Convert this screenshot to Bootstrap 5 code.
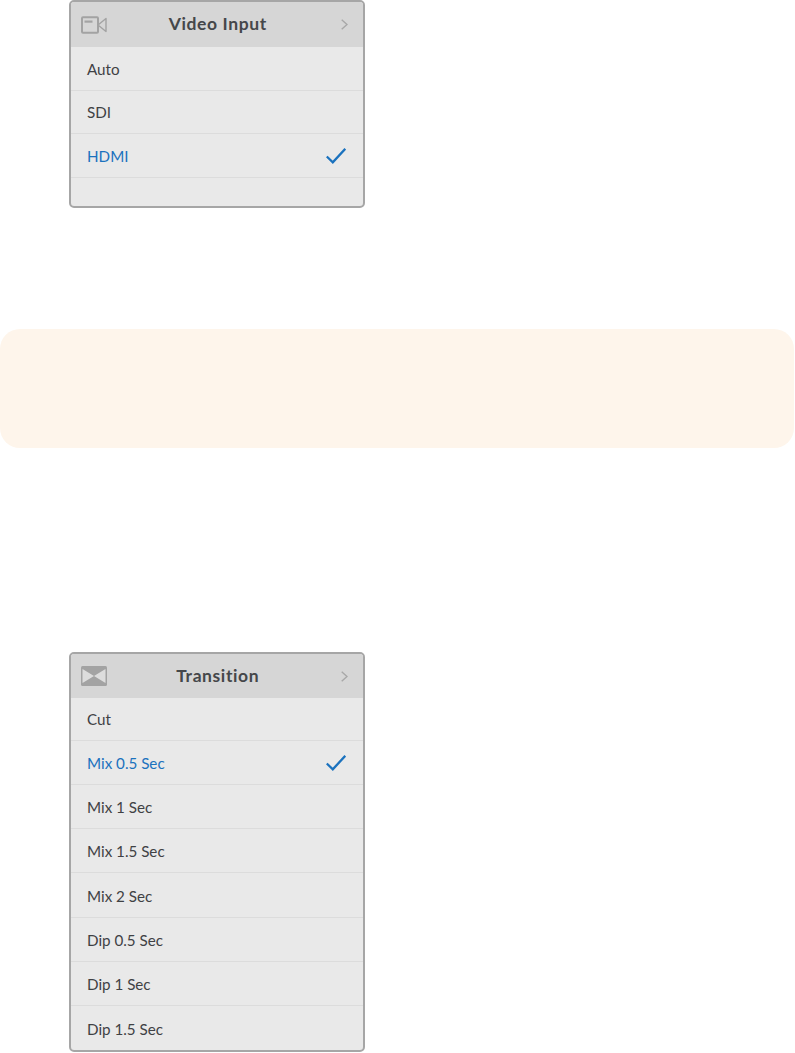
<!DOCTYPE html>
<html lang="en">

<head>
    <meta charset="UTF-8">
    <meta name="viewport" content="width=device-width, initial-scale=1.0">
    <title>Video Input and Transition Menus</title>
    <link href="https://cdn.jsdelivr.net/npm/bootstrap@5.3.0/dist/css/bootstrap.min.css" rel="stylesheet">
    <style>
        body {
            background-color: #FFFFFF;
            font-family: "Lato", "Liberation Sans", sans-serif;
            overflow: hidden;
        }

        .menu-panel {
            width: 296px;
            margin-left: 69px;
            background-color: #E9E9E9;
            border: 2px solid #A6A6A6;
            border-radius: 5px;
            overflow: hidden;
        }

        .menu-head {
            height: 45px;
            background-color: #D6D6D6;
            padding: 0 15px 0 9.5px;
            color: #45474A;
            font-size: 17.5px;
            font-weight: 700;
            letter-spacing: 0.6px;
        }

        .menu-tall .menu-head {
            height: 44px;
        }

        .menu-title {
            flex: 1;
            text-align: center;
            margin-right: 12px;
        }

        .menu-row {
            height: 43.5px;
            padding: 2px 17px 0 16px;
            background-color: transparent;
            border: 0;
            border-bottom: 1px solid #DCDCDC;
            border-radius: 0;
            color: #3F4144;
            font-size: 15.2px;
        }

        .menu-tall .menu-row {
            height: 44.3px;
        }

        .menu-tall .menu-row:first-child {
            height: 42.6px;
        }

        .menu-tall .menu-row:last-child {
            height: 43.8px;
            border-bottom: 0;
        }

        .menu-row.is-picked {
            color: #1B72BE;
        }

        .menu-row.is-blank {
            height: 28.5px;
            border-bottom: 0;
        }

        .notice-band {
            height: 119px;
            margin-top: 121px;
            margin-bottom: 204px;
            margin-right: 1px;
            background-color: #FEF5EB;
            border-radius: 20px;
        }
    </style>
</head>

<body>
    <div class="menu-panel">
        <div class="menu-head d-flex align-items-center">
            <svg width="26" height="18" viewBox="0 0 26 18" fill="none">
                <rect x="1" y="1.2" width="16" height="15.6" rx="1" stroke="#A3A3A3" stroke-width="2"/>
                <rect x="3.5" y="4.5" width="8" height="2.2" fill="#A3A3A3"/>
                <path d="M17 9L25 2.5V15.5Z" stroke="#A3A3A3" stroke-width="1.4" stroke-linejoin="round"/>
            </svg>
            <div class="menu-title">Video Input</div>
            <svg width="7" height="11" viewBox="0 0 7 11" fill="none">
                <path d="M0.7 0.7L6 5.5L0.7 10.3" stroke="#A8A8A8" stroke-width="1.4"/>
            </svg>
        </div>
        <ul class="list-group list-group-flush">
            <li class="list-group-item menu-row d-flex align-items-center">Auto</li>
            <li class="list-group-item menu-row d-flex align-items-center">SDI</li>
            <li class="list-group-item menu-row is-picked d-flex align-items-center justify-content-between">HDMI
                <svg width="20" height="16" viewBox="0 0 20 16" fill="none">
                    <path d="M0.8 8.5L6.8 14.3L19.3 0.8" stroke="#1B72BE" stroke-width="2.3"/>
                </svg>
            </li>
            <li class="list-group-item menu-row is-blank"></li>
        </ul>
    </div>

    <div class="notice-band"></div>

    <div class="menu-panel menu-tall">
        <div class="menu-head d-flex align-items-center">
            <svg width="26" height="20" viewBox="0 0 26 20">
                <rect x="0" y="0" width="26" height="20" rx="1.5" fill="#A3A3A3"/>
                <path d="M1.5 3L13 10L1.5 17Z M24.5 3L13 10L24.5 17Z" fill="#DDDDDD"/>
            </svg>
            <div class="menu-title">Transition</div>
            <svg width="7" height="11" viewBox="0 0 7 11" fill="none">
                <path d="M0.7 0.7L6 5.5L0.7 10.3" stroke="#A8A8A8" stroke-width="1.4"/>
            </svg>
        </div>
        <ul class="list-group list-group-flush">
            <li class="list-group-item menu-row d-flex align-items-center">Cut</li>
            <li class="list-group-item menu-row is-picked d-flex align-items-center justify-content-between">Mix 0.5 Sec
                <svg width="20" height="16" viewBox="0 0 20 16" fill="none">
                    <path d="M0.8 8.5L6.8 14.3L19.3 0.8" stroke="#1B72BE" stroke-width="2.3"/>
                </svg>
            </li>
            <li class="list-group-item menu-row d-flex align-items-center">Mix 1 Sec</li>
            <li class="list-group-item menu-row d-flex align-items-center">Mix 1.5 Sec</li>
            <li class="list-group-item menu-row d-flex align-items-center">Mix 2 Sec</li>
            <li class="list-group-item menu-row d-flex align-items-center">Dip 0.5 Sec</li>
            <li class="list-group-item menu-row d-flex align-items-center">Dip 1 Sec</li>
            <li class="list-group-item menu-row d-flex align-items-center">Dip 1.5 Sec</li>
        </ul>
    </div>

    <script src="https://cdn.jsdelivr.net/npm/bootstrap@5.3.0/dist/js/bootstrap.bundle.min.js"></script>
</body>

</html>
